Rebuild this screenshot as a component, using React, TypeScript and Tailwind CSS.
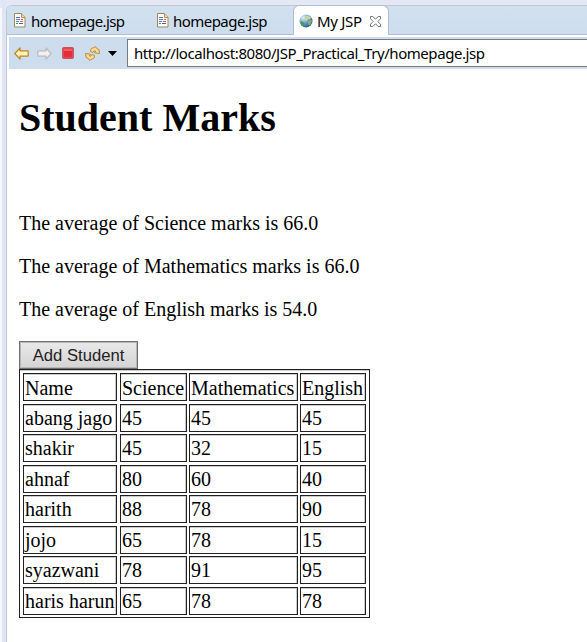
const ui = "font-['Noto_Sans','Open_Sans',sans-serif]";

const rows = [
  ["Name", "Science", "Mathematics", "English"],
  ["abang jago", "45", "45", "45"],
  ["shakir", "45", "32", "15"],
  ["ahnaf", "80", "60", "40"],
  ["harith", "88", "78", "90"],
  ["jojo", "65", "78", "15"],
  ["syazwani", "78", "91", "95"],
  ["haris harun", "65", "78", "78"],
];

function FileIcon() {
  return (
    <svg width="12" height="15" viewBox="0 0 12 15" className="shrink-0">
      <path d="M.5.5h7l3.500 4v9.500H.5z" fill="#f8fafc" stroke="#a18a52" />
      <path d="M7.500.5v4H11" fill="#ead9a0" stroke="#b99343" />
      <path d="M2 4.500h4" stroke="#3b7ac5" />
      <path d="M2 6.500h2M7 6.500h2" stroke="#d45b67" />
      <path d="M4 6.500h2M2 8.500h3" stroke="#4e83c5" />
      <path d="M6 8.500h3" stroke="#df5665" />
      <path d="M2 10.500h2" stroke="#35996c" />
      <path d="M5 10.500h4" stroke="#3269b2" />
    </svg>
  );
}

function Globe() {
  return (
    <svg width="14" height="14" viewBox="0 0 14 14" className="shrink-0">
      <defs>
        <radialGradient id="sea" cx=".3" cy=".25" r=".8">
          <stop stopColor="#e2f1f8" />
          <stop offset=".5" stopColor="#6ba5ca" />
          <stop offset="1" stopColor="#245c8e" />
        </radialGradient>
      </defs>
      <circle cx="7" cy="7" r="6.500" fill="url(#sea)" />
      <path d="M7 2l2-.5 3 2-1 2-2-.5-1 2-2-1V4z" fill="#c9d49b" />
      <path d="M2 7l2 1 2 2-1 2.500-2-1-1-2z" fill="#4f9557" />
      <path d="M9 7l3-1 1 1-2 4-1 .5-1-2z" fill="#8eac69" />
    </svg>
  );
}

function Arrow({ right = false }: { right?: boolean }) {
  return (
    <svg width="15" height="13" viewBox="0 0 15 13" className={right ? "shrink-0 -scale-x-100" : "shrink-0"}>
      <path
        d="M.8 6.500L6 .9v2.900h7.500q.7 0 .7.700v4q0 .7-.7.700H6v2.900z"
        fill={right ? "#f0f0ef" : "#fff2bc"}
        stroke={right ? "#b6babd" : "#bd851b"}
        strokeWidth="1.200"
        strokeLinejoin="round"
      />
    </svg>
  );
}

function Refresh() {
  return (
    <svg width="15" height="15" viewBox="0 0 15 15" className="shrink-0">
      <g fill="#f8dc96" stroke="#b9852d" strokeWidth=".9" strokeLinejoin="round">
        <path d="M5.500 5.500Q5 2 9 1.700L10.500.5l1 1.800 2.500 1.400.5 3.800-5-.7 1.300-1.700Q8.500 4 8 6.500z" />
        <path d="M9.500 9.500Q10 13 6 13.300l-1.500 1.200-1-1.800L1 11.300.5 7.500l5 .7-1.300 1.700Q6.500 11 7 8.500z" />
      </g>
    </svg>
  );
}

function CloseIcon() {
  return (
    <svg width="11" height="11" viewBox="0 0 11 11" className="shrink-0">
      <path d="M.5.5h2.300l2.700 2.700L8.200.5h2.300v2.300L7.800 5.500l2.700 2.700v2.300H8.200L5.500 7.800l-2.700 2.700H.5V8.200l2.700-2.700L.5 2.800z" fill="white" stroke="#5e666e" strokeWidth=".9" />
    </svg>
  );
}

export default function App() {
  return (
    <div className="flex h-[642px] w-[587px] overflow-hidden bg-[#e4e8f5]">
      <div className="mt-2 w-[2px] shrink-0 bg-[#f7f8fc]" />
      <div className="w-1 shrink-0 bg-[#dfe5f4]" />
      <main className="mt-[5px] flex min-w-0 flex-1 flex-col rounded-tl-[6px] border-t border-l border-[#c3c7cf] bg-white">
        <div className={`flex h-[29px] shrink-0 rounded-tl-[5px] border-b border-[#b3bcd0] bg-linear-to-b from-[#d2e1ef] to-[#cddded] text-[15px] leading-[29px] text-black ${ui}`}>
          <div className="flex w-[143px] items-center pl-[7px]">
            <span className="mt-px"><FileIcon /></span>
            <span className="mt-[2px] ml-[5px] tracking-[-0.58px]">homepage.jsp</span>
          </div>
          <div className="flex w-[143px] items-center pl-[7px]">
            <span className="mt-px"><FileIcon /></span>
            <span className="mt-[2px] ml-1 tracking-[-0.54px]">homepage.jsp</span>
          </div>
          <div className="-mt-px flex h-[30px] w-[96px] items-center rounded-t-[6px] border-x border-t border-[#aebbd0] bg-white pl-[5px]">
            <span className="mt-px"><Globe /></span>
            <span className="mt-[2px] ml-1 w-[45px] whitespace-nowrap tracking-[-0.3px]">My JSP</span>
            <span className="mt-px ml-2"><CloseIcon /></span>
          </div>
        </div>
        <div className="mt-[2px] ml-[2px] flex h-8 shrink-0 items-center bg-[#cedded]">
          <div className="flex w-[118px] items-center pl-[5px]">
            <Arrow />
            <span className="ml-2 flex"><Arrow right /></span>
            <svg width="12" height="12" viewBox="0 0 12 12" className="ml-[10px] shrink-0">
              <rect x=".7" y=".7" width="10.600" height="10.600" rx="1" fill="#df4b54" stroke="#c85258" strokeWidth="1.200" />
              <path d="M2 2h8v8H2z" fill="#e42d38" />
              <path d="M2 2h8v2H2z" fill="#ef5d61" />
            </svg>
            <span className="ml-[11px]"><Refresh /></span>
            <svg width="9" height="5" viewBox="0 0 9 5" className="ml-2 shrink-0"><path d="M0 0h9L4.500 5z" /></svg>
          </div>
          <div className={`flex h-7 flex-1 items-center border border-r-0 border-[#777b80] bg-white pl-[6px] text-[15px] tracking-[-0.44px] text-black ${ui}`}>
            http://localhost:8080/JSP_Practical_Try/homepage.jsp
          </div>
        </div>
        <section className="pl-3 font-['Liberation_Serif',serif] text-[20px] text-black">
          <h1 className="mt-[26px] h-[46px] text-[40px] leading-[46px] font-bold">Student Marks</h1>
          <div className="mt-[71px] flex flex-col gap-5 leading-[23px]">
            <p>The average of Science marks is 66.0</p>
            <p>The average of Mathematics marks is 66.0</p>
            <p>The average of English marks is 54.0</p>
          </div>
          <button className="mt-5 block h-7 w-[119px] border border-[#707070] bg-linear-to-b from-[#e9e9e9] to-[#d4d4d4] pt-px font-['Liberation_Sans',sans-serif] text-[16.670px] leading-[26px] text-[#222] shadow-[inset_0_0_0_1px_#b8b8b8]">Add Student</button>
          <div className="grid h-[249px] w-[351px] grid-cols-[94px_67px_109px_66px] grid-rows-[31px_30px_31px_30px_31px_30px_31px_28px] gap-x-[2px] border border-[#202020] pt-[3px] pl-[3px] shadow-[inset_0_1px_#ccc]">
            {rows.flatMap((row, r) =>
              row.map((cell, c) => (
                <div
                  key={`${r}-${c}`}
                  className={`h-7 border border-[#202020] pl-[1px] whitespace-nowrap shadow-[inset_-1px_1px_#ccc] ${r === 0 ? "leading-[28px]" : "leading-[27px]"} ${c === 0 ? "w-[94px]" : c === 1 ? "ml-px w-[67px]" : c === 2 ? "ml-px w-[109px]" : "ml-px w-[66px]"}`}
                >
                  {cell}
                </div>
              ))
            )}
          </div>
        </section>
      </main>
    </div>
  );
}
